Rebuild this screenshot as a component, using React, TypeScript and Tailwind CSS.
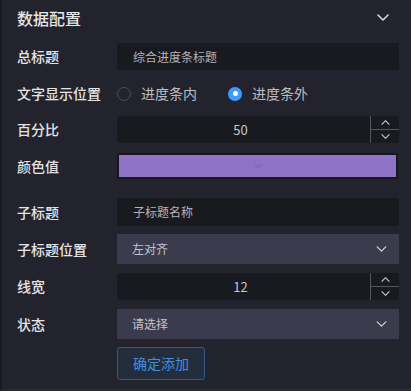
const font = { fontFamily: '"Noto Sans CJK SC", "Noto Sans", sans-serif' };

function Chevron({ className = "", up = false }: { className?: string; up?: boolean }) {
  return (
    <svg viewBox="0 0 12 7" className={className} fill="none" stroke="currentColor" strokeWidth="1.5" strokeLinecap="round" strokeLinejoin="round">
      {up ? <path d="M1 6L6 1L11 6" /> : <path d="M1 1L6 6L11 1" />}
    </svg>
  );
}

function Label({ children }: { children: React.ReactNode }) {
  return <div className="w-[100px] shrink-0 text-[14px] font-medium text-[#e4e4e4]">{children}</div>;
}

function NumberInput({ value }: { value: string }) {
  return (
    <div className="flex-1 h-[27px] bg-[#191920] rounded-[2px] flex">
      <div className="flex-1 flex items-center justify-center pr-[6px] text-[13px] text-[#c8c8c8]">{value}</div>
      <div className="w-[29px] border-l border-[#55555c] flex flex-col">
        <div className="flex-1 flex items-center justify-center border-b border-[#55555c]">
          <Chevron up className="w-[9px] h-[5px] text-[#d0d0d0]" />
        </div>
        <div className="flex-1 flex items-center justify-center">
          <Chevron className="w-[9px] h-[5px] text-[#d0d0d0]" />
        </div>
      </div>
    </div>
  );
}

function Select({ value }: { value: string }) {
  return (
    <div className="flex-1 h-[30px] bg-[#3c3b4e] flex items-center justify-between pl-[15px] pr-[12px]">
      <span className="text-[12px] text-[#c4c4c8]">{value}</span>
      <Chevron className="w-[11px] h-[6px] text-[#cfcfd4]" />
    </div>
  );
}

export default function App() {
  return (
    <div style={font} className="w-[411px] h-[391px] bg-[#23232d] flex">
      <div className="w-[2px] bg-[#1b1b22]" />
      <div className="flex-1 pl-[15px] pr-[12px] flex flex-col border-b border-[#2f2f3a] h-[390px]">
        <div className="h-[35px] flex items-center justify-between">
          <span className="text-[16px] font-medium text-[#e6e6e6]">数据配置</span>
          <Chevron className="w-[12px] h-[7px] mr-[10px] text-[#dcdcdc]" />
        </div>

        <div className="mt-[8px] flex items-center">
          <Label>总标题</Label>
          <div className="flex-1 h-[27px] bg-[#191920] rounded-[2px] flex items-center pl-[16px] text-[12px] text-[#b4b4b8]">
            综合进度条标题
          </div>
        </div>

        <div className="mt-[10px] h-[27px] flex items-center">
          <Label>文字显示位置</Label>
          <div className="flex items-center">
            <span className="w-[14px] h-[14px] rounded-full border border-[#4d4d56]" />
            <span className="ml-[10px] text-[14px] text-[#bdbdc2]">进度条内</span>
          </div>
          <div className="flex items-center ml-[31px]">
            <span className="w-[14px] h-[14px] rounded-full bg-[#3e9cff] flex items-center justify-center">
              <span className="w-[5px] h-[5px] rounded-full bg-white" />
            </span>
            <span className="ml-[10px] text-[14px] text-[#bdbdc2]">进度条外</span>
          </div>
        </div>

        <div className="mt-[9px] flex items-center">
          <Label>百分比</Label>
          <NumberInput value="50" />
        </div>

        <div className="mt-[10px] flex items-center">
          <Label>颜色值</Label>
          <div className="flex-1 mr-[1px] h-[26px] bg-[#16161d] p-[2px] rounded-[2px]">
            <div className="h-full bg-[#8d72c6] flex items-center justify-center">
              <Chevron className="w-[8px] h-[4px] text-[#7459a8]" />
            </div>
          </div>
        </div>

        <div className="mt-[19px] flex items-center">
          <Label>子标题</Label>
          <div className="flex-1 h-[28px] bg-[#191920] rounded-[2px] flex items-center pl-[16px] text-[12px] text-[#b4b4b8]">
            子标题名称
          </div>
        </div>

        <div className="mt-[8px] flex items-center">
          <Label>子标题位置</Label>
          <Select value="左对齐" />
        </div>

        <div className="mt-[9px] flex items-center">
          <Label>线宽</Label>
          <NumberInput value="12" />
        </div>

        <div className="mt-[9px] flex items-center">
          <Label>状态</Label>
          <Select value="请选择" />
        </div>

        <div className="mt-[8px] pl-[100px]">
          <button className="w-[88px] h-[33px] rounded-[3px] border border-[#2b5c8c] bg-[#232d3c] text-[14px] text-[#3f90e2]">
            确定添加
          </button>
        </div>
      </div>
    </div>
  );
}
